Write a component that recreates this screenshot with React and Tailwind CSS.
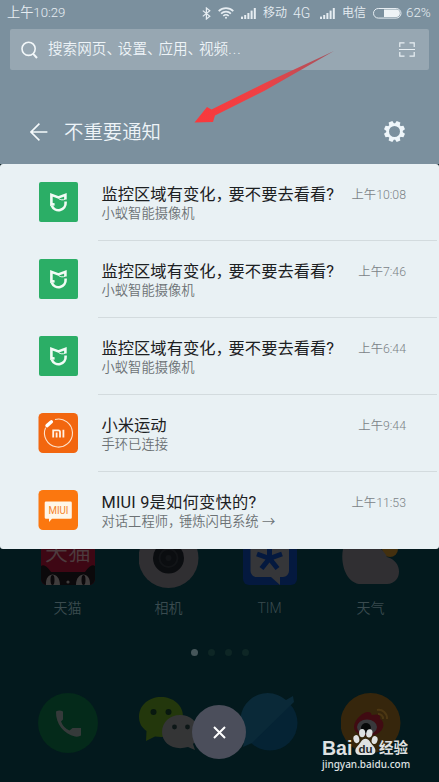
import React from 'react';

const notifications = [
    { id: 1, icon: 'mijia', title: ['监控区域有变化', '要不要去看看?'], text: ['小蚁智能摄像机'], time: '10:08' },
    { id: 2, icon: 'mijia', title: ['监控区域有变化', '要不要去看看?'], text: ['小蚁智能摄像机'], time: '7:46' },
    { id: 3, icon: 'mijia', title: ['监控区域有变化', '要不要去看看?'], text: ['小蚁智能摄像机'], time: '6:44' },
    { id: 4, icon: 'mifit', title: ['小米运动'], text: ['手环已连接'], time: '9:44' },
    { id: 5, icon: 'miui', title: ['MIUI 9是如何变快的?'], text: ['对话工程师', '锤炼闪电系统 →'], time: '11:53' },
]

function Signal() {
    return (
        <svg width="15" height="11" viewBox="0 0 15 11" fill="#e6edf2">
            <rect x="0" y="8.6" width="2" height="2.4" />
            <rect x="3.2" y="7" width="2" height="4" />
            <rect x="6.4" y="5" width="2" height="6" />
            <rect x="9.6" y="2.6" width="2" height="8.4" />
            <rect x="12.8" y="0" width="2" height="11" />
        </svg>
    )
}

function StatusBar() {
    return (
        <div className="flex h-[26px] items-center pl-[7px] pr-[7px] text-[12.5px] text-[#e6edf2]">
            <span className="text-[13.2px]">上午10:29</span>
            <svg className="ml-auto" width="9" height="13" viewBox="0 0 9 13" fill="none" stroke="#e6edf2" strokeWidth="1.2">
                <path d="M0.8 3.6 L7.8 9.2 L4.4 12 V1 L7.8 3.8 L0.8 9.4" />
            </svg>
            <svg className="ml-[7px]" width="16" height="12" viewBox="0 0 16 12" fill="none" stroke="#e6edf2" strokeWidth="1.7">
                <path d="M0.7 4.2 a10.4 10.4 0 0 1 14.6 0" />
                <path d="M3.1 6.7 a7 7 0 0 1 9.8 0" />
                <path d="M5.3 9 a3.9 3.9 0 0 1 5.4 0" />
                <circle cx="8" cy="10.8" r="1" fill="#e6edf2" stroke="none" />
            </svg>
            <span className="ml-[7px]"><Signal /></span>
            <span className="ml-[7px] w-[24px] whitespace-nowrap text-[12px]">移动</span>
            <span className="ml-[6px] w-[19px] whitespace-nowrap text-[14px]">4G</span>
            <span className="ml-[8px]"><Signal /></span>
            <span className="ml-[7px] w-[24px] whitespace-nowrap text-[12px]">电信</span>
            <svg className="ml-[7px]" width="29" height="11" viewBox="0 0 29 11">
                <rect x="0.5" y="0.5" width="27.5" height="9.6" rx="4.8" fill="none" stroke="#e6edf2" strokeWidth="1" />
                <path d="M11 1.6 H23.2 a3.7 3.7 0 0 1 0 7.4 H11 Z" fill="#eef3f6" />
            </svg>
            <span className="ml-[4px] w-[26px] whitespace-nowrap text-[13.4px]">62%</span>
        </div>
    )
}

function SearchBar() {
    return (
        <div className="mx-[10px] mt-[3px] flex h-[41px] items-center rounded-[2px] bg-[#97a7b2] pl-[11px] pr-[14px]">
            <svg width="17" height="18" viewBox="0 0 17 18" fill="none" stroke="#f3f8fa" strokeWidth="1.6">
                <circle cx="7.6" cy="7.8" r="6.6" />
                <path d="M12.2 12.8 L16 17" strokeWidth="2" />
            </svg>
            <span className="ml-[10px] whitespace-nowrap text-[14.6px] text-[#eef4f8]">
                搜索网页<i className="tracking-[-3.2px] not-italic">、</i>设置<i className="tracking-[-3.2px] not-italic">、</i>应用<i className="tracking-[-3.2px] not-italic">、</i>视频<i className="tracking-[1px] not-italic">...</i>
            </span>
            <svg className="ml-auto" width="16" height="15" viewBox="0 0 16 15" fill="none" stroke="#e9f0f4" strokeWidth="1.2">
                <path d="M0.8 5 V0.8 H5.5 M10.5 0.8 H15.2 V5 M15.2 10 V14.2 H10.5 M5.5 14.2 H0.8 V10 M0 7.5 H16" />
            </svg>
        </div>
    )
}

function Header() {
    return (
        <div className="mt-[37px] flex h-[49px] items-center pl-[30px] pr-[34px]">
            <svg width="18" height="18" viewBox="0 0 18 18" fill="none" stroke="#f5fafc" strokeWidth="1.6">
                <path d="M9.4 0.6 L1 9 L9.4 17.4 M1 9 H17.4" />
            </svg>
            <span className="ml-[16px] pt-[3px] text-[19.4px] text-[#eef4f8]">不重要通知</span>
            <svg className="ml-auto" width="21" height="21" viewBox="-10.5 -10.5 21 21" fill="#eff6fa">
                <circle r="6.9" fill="none" stroke="#eff6fa" strokeWidth="2.8" />
                {[0, 45, 90, 135, 180, 225, 270, 315].map((deg) =>
                    <path key={deg} transform={`rotate(${deg + 22.5})`} d="M-2.6 -7.2 L-2 -10.5 H2 L2.6 -7.2 Z" />
                )}
            </svg>
        </div>
    )
}

function AppIcon({ name }) {
    if (name === 'mijia') {
        return (
            <svg width="40" height="40" viewBox="0 0 40 40">
                <rect x="1" y="0" width="39" height="40" rx="2" fill="#2bae66" />
                <g fill="none" stroke="#f2fbf5" strokeWidth="2.6">
                    <path d="M16.6 22.2 L13.4 22.6 V12.8 L20.4 15.4 L27.4 12.8 V17.4" />
                    <path d="M27.4 17 C25 18.4 22.6 18 20.6 16.6" strokeWidth="1" />
                    <path d="M27.6 19.4 V20.4 a7.2 7.2 0 0 1 -13.8 3.4" />
                </g>
            </svg>
        )
    }
    if (name === 'mifit') {
        return (
            <svg width="40" height="40" viewBox="0 0 40 40">
                <rect x="0.5" width="39.5" height="40" rx="4.5" fill="#f2660f" />
                <path d="M17 6.5 A14 14 0 1 1 7.6 14.6" fill="none" stroke="#fde3cd" strokeWidth="1.1" />
                <path d="M9 12.6 L13.4 8.8" stroke="#fff" strokeWidth="3.4" strokeLinecap="round" />
                <path d="M15.2 24.4 V17.4 H20.4 a1.6 1.6 0 0 1 1.6 1.6 V24.4 M18.6 19.6 V24.4 M25.4 16.8 V24.4" fill="none" stroke="#fff1e4" strokeWidth="1.8" />
            </svg>
        )
    }
    return (
        <svg width="40" height="40" viewBox="0 0 40 40">
            <rect x="0.5" width="39.5" height="40" rx="4.5" fill="#fb770f" />
            <path d="M8 11.5 H32.5 a1.3 1.3 0 0 1 1.3 1.3 V27.5 a1.3 1.3 0 0 1 -1.3 1.3 H14 L11 32 V28.8 H8 a1.3 1.3 0 0 1 -1.3 -1.3 V12.8 A1.3 1.3 0 0 1 8 11.5 Z" fill="#fff6e8" />
            <text x="20.5" y="24.4" textAnchor="middle" fontSize="11.5" fontWeight="400" textLength="20" lengthAdjust="spacingAndGlyphs" fill="#f5842a" fontFamily="Roboto">MIUI</text>
        </svg>
    )
}

function Notification({ item, last }) {
    return (
        <div className="flex h-[77.1px] pl-[38px]">
            <div className="mt-[18px] shrink-0"><AppIcon name={item.icon} /></div>
            <div className={last ? "ml-[20px] mr-[2px] flex grow pt-[20px]" : "ml-[20px] mr-[2px] flex grow border-b border-[#d3dbde] pt-[20px]"}>
                <div className="pl-[3.5px]">
                    <div className={last ? "whitespace-nowrap text-[16.3px] font-normal leading-[22px] tracking-[0.2px] text-[#1c2022]" : "whitespace-nowrap text-[16.3px] font-normal leading-[22px] text-[#1c2022]"}>
                        {item.title[0]}{item.title[1] && <><i className="tracking-[-3.2px] not-italic">，</i>{item.title[1]}</>}
                    </div>
                    <div className="whitespace-nowrap text-[13.3px] leading-[15px] text-[#6c7275]">
                        {item.text[0]}{item.text[1] && <><i className="tracking-[-2.4px] not-italic">，</i>{item.text[1]}</>}
                    </div>
                </div>
                <span className="ml-auto mr-[31px] whitespace-nowrap text-[12.3px] leading-[22px] text-[#7c8387]">上午{item.time}</span>
            </div>
        </div>
    )
}

function HomeApps() {
    return (
        <div className="grid grid-cols-4 pl-[17px] pr-[18px] text-center text-[14px] text-[#3a4b4f]">
            <div className="flex flex-col items-center">
                <svg width="60" height="42" viewBox="0 0 60 42">
                    <path d="M3 0 H57 V30 a6 6 0 0 1 -6 6 H9 a6 6 0 0 1 -6 -6 Z" fill="#3e0714" />
                    <text x="30" y="11" textAnchor="middle" fontSize="23" fill="#4d3b3e">天猫</text>
                    <path d="M3 17 Q7 14 13 23 H47 Q53 14 57 17 V30 a6 6 0 0 1 -6 6 H9 a6 6 0 0 1 -6 -6 Z" fill="#0b090b" />
                    <path d="M8 36 C7 22 22 22 22 36 Z M38 36 C38 22 53 22 52 36 Z" fill="#403d3d" />
                    <ellipse cx="14.5" cy="31" rx="2" ry="5" fill="#0b090b" />
                    <ellipse cx="45.5" cy="31" rx="2" ry="5" fill="#0b090b" />
                    <circle cx="30" cy="33" r="1.6" fill="#403d3d" />
                </svg>
                <span className="mt-[7px]">天猫</span>
            </div>
            <div className="flex flex-col items-center">
                <svg width="60" height="42" viewBox="0 0 60 42">
                    <circle cx="29.5" cy="9" r="30" fill="#302f32" />
                    <circle cx="29.5" cy="9" r="15.5" fill="#0b0d10" />
                    <circle cx="29.5" cy="9" r="9" fill="none" stroke="#121417" strokeWidth="2" />
                    <circle cx="29.5" cy="9" r="3" fill="#121417" />
                </svg>
                <span className="mt-[7px]">相机</span>
            </div>
            <div className="flex flex-col items-center">
                <svg width="60" height="42" viewBox="0 0 60 42">
                    <path d="M3 0 H57 V30 a6 6 0 0 1 -6 6 H9 a6 6 0 0 1 -6 -6 Z" fill="#04193f" />
                    <path d="M10.5 0 H49 V22 a6 6 0 0 1 -6 6 H40 V36 L31 28 H16.5 a6 6 0 0 1 -6 -6 Z" fill="#353639" />
                    <path d="M29.5 -1 V10 M29.5 9.5 L17 5 M29.5 9.5 L42 5 M29.5 9.5 L21.5 19.5 M29.5 9.5 L37.5 19.5" stroke="#04193f" strokeWidth="5" />
                </svg>
                <span className="mt-[7px]">TIM</span>
            </div>
            <div className="flex flex-col items-center">
                <svg width="60" height="42" viewBox="0 0 60 42">
                    <circle cx="49" cy="0" r="8" fill="#43300f" />
                    <path d="M2 0 C-1 14 5 35 20 35 H46 C62 34 62 12 46 8 C44 4 42 2 40 0 Z" fill="#302f32" />
                </svg>
                <span className="mt-[7px]">天气</span>
            </div>
        </div>
    )
}

function Dock() {
    return (
        <div className="mt-[37px] grid grid-cols-4 pl-[17px] pr-[18px]">
            <svg className="mx-auto" width="60" height="60" viewBox="0 0 60 60">
                <circle cx="30" cy="30" r="30" fill="#042a1a" />
                <path d="M18 18.5 q3.5 -2 7 0 v8 l-2 2 q2.5 6.5 8.5 9 l3 -2.5 h8.5 v7.5 q-2 1.5 -6 1 C26 41 17.5 31 18 18.5 Z" fill="#353a3a" />
            </svg>
            <svg className="mx-auto" width="60" height="60" viewBox="0 0 60 60">
                <path d="M22 4 C34 4 44 12 44 23 C44 35 34 44 22 44 L16 43.5 L7 48 L7.5 38 C2 34 0 29 0 24 C0 12 10 4 22 4 Z" fill="#23370c" />
                <circle cx="14.5" cy="19" r="3" fill="#08180f" />
                <circle cx="29.5" cy="19" r="3" fill="#08180f" />
                <path d="M41 22 C52 22 59 29 59 39 C59 44 57 48 54 51 L56 57 L49 54 C35 58 23 51 23 39 C23 29 31 22 41 22 Z" fill="#343536" />
                <circle cx="35.5" cy="34" r="2.4" fill="#0d1717" />
                <circle cx="48.5" cy="34" r="2.4" fill="#0d1717" />
            </svg>
            <svg className="mx-auto" width="60" height="60" viewBox="0 0 60 60">
                <circle cx="30" cy="30" r="27.5" fill="#052334" />
                <path d="M5 43 L3 54 L12 50 L54 9 L53 3 L46 7 A27.5 27.5 0 0 0 5 43 Z" fill="#0a2938" />
            </svg>
            <svg className="mx-auto" width="60" height="60" viewBox="0 0 60 60">
                <circle cx="29.5" cy="30" r="30" fill="#36260c" />
                <path d="M13 33 C14 26 22 19 27 19 C31 19 30 22 31 22 C36 21 40 21 39 26 C44 28 44 37 36 41 C26 45 12 42 13 33 Z" fill="#400b12" />
                <ellipse cx="26" cy="34" rx="10" ry="7.5" fill="#38383b" />
                <circle cx="25" cy="35" r="5" fill="#08090a" />
                <path d="M36 17 a8.5 8.5 0 0 1 10 9 M37 21 a4.5 4.5 0 0 1 5 5" fill="none" stroke="#4c3713" strokeWidth="2" />
            </svg>
        </div>
    )
}

function Watermark() {
    return (
        <div className="absolute left-[322px] top-[728px] text-[#dfe1e2]">
            <div className="flex h-[29px] items-end">
                <span className="w-[31px] font-['Liberation_Sans'] text-[19.5px] font-bold leading-[18px]">Bai</span>
                <svg className="mb-px" width="25" height="28" viewBox="0 0 26 28" fill="#dfe1e2">
                    <ellipse cx="3.5" cy="11" rx="3" ry="4.2" transform="rotate(-15 3.5 11)" />
                    <ellipse cx="9.5" cy="4.7" rx="3.2" ry="4.3" />
                    <ellipse cx="17" cy="5" rx="3.2" ry="4.3" transform="rotate(12 17 5)" />
                    <ellipse cx="22.5" cy="12" rx="3" ry="4.2" transform="rotate(15 22.5 12)" />
                    <path d="M13 10.5 C17 10.5 18 15 21 18 C26 24 22 28 18 27.5 H8 C3 28 0 23 5 18 C8 15 9 10.5 13 10.5 Z" />
                    <text x="13" y="25" textAnchor="middle" fontSize="12" fontWeight="bold" fontFamily="Liberation Sans" fill="#24292a">du</text>
                </svg>
                <span className="ml-px whitespace-nowrap text-[14.5px] font-bold leading-[17px]">经验</span>
            </div>
            <div className="font-['Noto_Sans'] text-[10px] font-medium leading-[14px]">jingyan.baidu.com</div>
        </div>
    )
}

export default function App() {
    return (
        <div className="relative h-[782px] w-[439px] overflow-hidden bg-[#03191d] font-[Roboto,'Noto_Sans_CJK_SC',sans-serif] font-[350]">
            <div className="h-[164px] bg-[#7b909e]">
                <StatusBar />
                <SearchBar />
                <Header />
            </div>
            <div className="h-[385px] rounded-[3px] bg-[#e9f1f4]">
                {notifications.map((item) =>
                    <Notification key={item.id} item={item} last={item.id === notifications.length} />
                )}
            </div>
            <HomeApps />
            <div className="mt-[30px] flex justify-center gap-[10px]">
                <div className="h-[7px] w-[7px] rounded-full bg-[#46565a]" />
                <div className="h-[7px] w-[7px] rounded-full bg-[#0e2625]" />
                <div className="h-[7px] w-[7px] rounded-full bg-[#0e2625]" />
                <div className="h-[7px] w-[7px] rounded-full bg-[#0e2625]" />
            </div>
            <Dock />
            <button className="absolute left-[192px] top-[705px] flex h-[54px] w-[54px] items-center justify-center rounded-full bg-[#4b4e5b]">
                <svg width="13" height="13" viewBox="0 0 13 13" stroke="#fff" strokeWidth="2">
                    <path d="M1 1 L12 12 M12 1 L1 12" />
                </svg>
            </button>
            <Watermark />
            <svg className="absolute left-[190px] top-[45px]" width="150" height="85" viewBox="190 45 150 85">
                <defs>
                    <linearGradient id="tail" x1="0" x2="1">
                        <stop offset="0" stopColor="#f9393c" />
                        <stop offset="0.5" stopColor="#ee4145" />
                        <stop offset="1" stopColor="#a05560" />
                    </linearGradient>
                </defs>
                <path d="M194.5 122.5 L207 107 L211.5 109.5 L265 83 L334 51 L265 90.5 L215 115.5 L213 122 Z" fill="url(#tail)" />
            </svg>
        </div>
    )
}
